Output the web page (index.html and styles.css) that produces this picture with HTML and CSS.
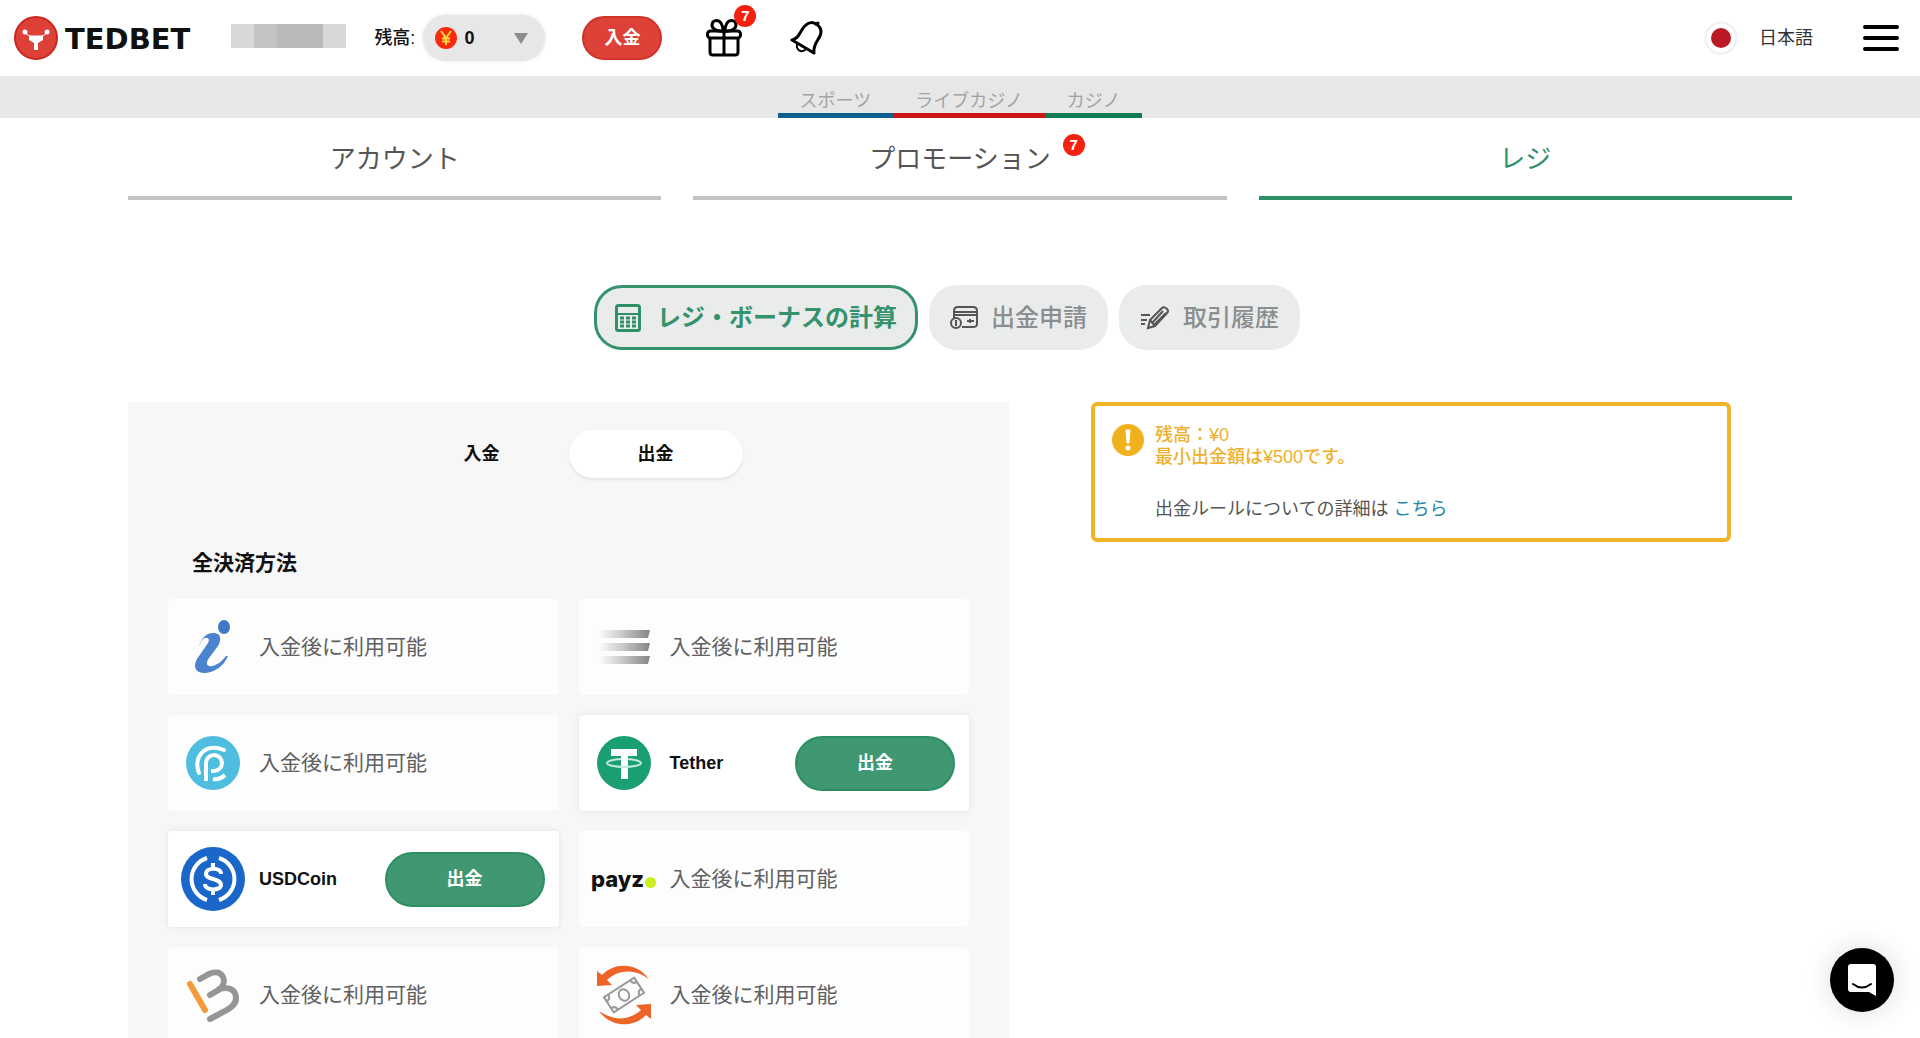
FILE: index.html
```html
<!DOCTYPE html>
<html lang="ja">
<head>
<meta charset="utf-8">
<title>TEDBET</title>
<link rel="stylesheet" href="styles.css">
</head>
<body>
<div class="page">
  <header class="header">
    <a class="logo" href="#">
      <svg width="44" height="44" viewBox="0 0 44 44" aria-hidden="true">
        <circle cx="22" cy="22" r="21" fill="#dc4036" stroke="#c8281f" stroke-width="2"/>
        <path d="M11 16c1 3 4 4 8 4h6c4 0 7-1 8-4" fill="none" stroke="#fff" stroke-width="1"/>
        <circle cx="11" cy="16" r="2.500" fill="#fff"/><circle cx="33" cy="16" r="2.500" fill="#fff"/>
        <path d="M15 20h14v4l-5 3v7h-4v-7l-5-3z" fill="#fff"/>
      </svg>
      <span class="logo-name">TEDBET</span>
    </a>
    <div class="user" aria-hidden="true"><i></i><i></i><i></i><i></i><i></i></div>
    <label class="balance-label" for="balance">残高:</label>
    <div class="balance">
      <svg class="balance-coin" width="22" height="22" viewBox="0 0 22 22" aria-hidden="true">
        <circle cx="11" cy="11" r="11" fill="#fa2a10"/>
        <path d="M6 4l5 7 5-7M11 11v7M7 11.500h8M7 14.500h8" fill="none" stroke="#ffd83a" stroke-width="2"/>
      </svg>
      <select id="balance" class="balance-select"><option>0</option></select>
      <svg class="balance-arrow" width="14" height="11" viewBox="0 0 14 11" aria-hidden="true"><path d="M0 0h14L7 11z" fill="#8c8c8c"/></svg>
    </div>
    <button class="deposit" type="button">入金</button>
    <button class="icon-button gift" type="button" aria-label="プレゼント">
      <svg width="36" height="38" viewBox="0 0 36 38" fill="none" stroke="#000" stroke-width="3" stroke-linejoin="round">
        <rect x="1.500" y="12" width="33" height="7" rx="3"/>
        <path d="M4 19v14q0 3 3 3h22q3 0 3-3V19M18 12v24M17 12C10 13 6 9 6 6c0-5 6-6 9-2q2 3 2 8zM19 12c7 1 11-3 11-6 0-5-6-6-9-2q-2 3-2 8z"/>
      </svg>
      <span class="badge gift-badge">7</span>
    </button>
    <button class="icon-button" type="button" aria-label="お知らせ">
      <svg width="34" height="36" viewBox="0 0 34 36" fill="none" stroke="#000" stroke-width="3" stroke-linecap="round" stroke-linejoin="round">
        <path d="M2 20c4-1 6-3 8-7 2-3 3-6 6-8 3-3 7-3 10-1 5 3 6 7 4 12-3 6-7 9-6 17z"/>
        <path d="M26 4l2-1"/><path d="M7 24c-1 6 4 9 8 6" stroke-width="2"/>
      </svg>
    </button>
    <button class="language" type="button">
      <svg width="34" height="34" viewBox="0 0 34 34" aria-hidden="true"><circle cx="17" cy="17" r="15.500" fill="#fff" stroke="#f0eef2" stroke-width="2"/><circle cx="17" cy="17" r="10" fill="#ba1a24"/></svg>
      <span>日本語</span>
    </button>
    <button class="icon-button menu" type="button" aria-label="メニュー">
      <svg width="36" height="28" viewBox="0 0 36 28" stroke="#000" stroke-width="4" stroke-linecap="round"><path d="M2 3h32M2 14h32M2 25h32"/></svg>
    </button>
  </header>

  <nav class="games">
    <a class="games-sports" href="#">スポーツ</a>
    <a class="games-live" href="#">ライブカジノ</a>
    <a class="games-casino" href="#">カジノ</a>
  </nav>

  <nav class="tabs">
    <a href="#">アカウント</a>
    <a href="#"><span class="tab-name">プロモーション<span class="badge tab-badge">7</span></span></a>
    <a class="is-active" href="#">レジ</a>
  </nav>

  <nav class="pills">
    <a class="pill is-active" href="#">
      <svg width="26" height="28" viewBox="0 0 26 28" fill="none" stroke="#2f9068" stroke-width="3" aria-hidden="true">
        <rect x="1.500" y="1.500" width="23" height="25" rx="2"/><path d="M2 10h22" stroke-width="2"/>
        <path d="M5 14h16M5 18h16M5 22h16" stroke-dasharray="4 2"/>
      </svg>
      レジ・ボーナスの計算
    </a>
    <a class="pill" href="#">
      <svg width="28" height="24" viewBox="0 0 28 24" fill="none" stroke="#555" stroke-width="2" aria-hidden="true">
        <path d="M4 12V5q0-4 4-4h15q4 0 4 4v13q0 3-4 3H12M4 6h23M4 9h23M17 15h7M20 13v4"/>
        <circle cx="6" cy="17" r="5" fill="#eaecec"/><path d="M6 14v6"/>
      </svg>
      出金申請
    </a>
    <a class="pill" href="#">
      <svg width="30" height="24" viewBox="0 0 30 24" fill="none" stroke="#555" stroke-width="2" aria-hidden="true">
        <path d="M8 22l2-8L22 2q2-2 5 1 2 2 0 4L15 20zM10 14l5 6M13 16L23 5M15 18L26 7M1 9h9M1 14h6M1 18h4"/>
      </svg>
      取引履歴
    </a>
  </nav>

  <main class="content">
    <section class="panel">
      <div class="switch">
        <button type="button">入金</button>
        <button class="is-active" type="button">出金</button>
      </div>
      <h2 class="panel-title">全決済方法</h2>
      <ul class="methods">
        <li class="method">
          <span class="method-icon">
            <svg width="38" height="54" viewBox="0 0 38 54"><ellipse cx="30" cy="7" rx="6" ry="7" fill="#4078c8"/><path d="M5 27C7 19 12 13 19 13c8 0 9 6 5 13L15 38c-4 6-2 9 3 8 6-1 11-6 14-10h2C30 46 20 53 10 53 1 53-1 46 3 39L14 23c2-4 0-6-3-5-3 1-4 4-6 9z" fill="#4c83d0"/></svg>
          </span>
          <span class="method-note">入金後に利用可能</span>
        </li>
        <li class="method">
          <span class="method-icon">
            <svg width="52" height="36" viewBox="0 0 52 36"><defs><linearGradient id="fade"><stop offset="0" stop-color="#fff"/><stop offset=".5" stop-color="#c4c4c4"/><stop offset="1" stop-color="#858585"/></linearGradient></defs><path d="M0 1h52l-2 8H0zM0 14h52l-2 8H0zM0 27h52l-2 8H0z" fill="url(#fade)"/></svg>
          </span>
          <span class="method-note">入金後に利用可能</span>
        </li>
        <li class="method">
          <span class="method-icon">
            <svg width="54" height="54" viewBox="0 0 54 54"><circle cx="27" cy="27" r="27" fill="#4ebde0"/><g fill="none" stroke="#fff" stroke-width="4"><path d="M13 37C7 23 17 6 38 14" stroke-linecap="round"/><path d="M20 45V27a8 8 0 1 1 8 8H25M27 43q7 1 12-4"/></g></svg>
          </span>
          <span class="method-note">入金後に利用可能</span>
        </li>
        <li class="method is-open">
          <span class="method-icon">
            <svg width="54" height="54" viewBox="0 0 54 54"><circle cx="27" cy="27" r="27" fill="#1a9f74"/><path d="M14 13h26v7h-9v23h-7V20H14z" fill="#fff"/><ellipse cx="27" cy="27" rx="17" ry="4" fill="none" stroke="#c4e8db" stroke-width="2"/><path d="M24 20h7v8h-7z" fill="#fff"/></svg>
          </span>
          <span class="method-name">Tether</span>
          <button class="withdraw" type="button">出金</button>
        </li>
        <li class="method is-open">
          <span class="method-icon">
            <svg width="64" height="64" viewBox="0 0 64 64"><circle cx="32" cy="32" r="32" fill="#1a67c9"/><g fill="none" stroke="#fff" stroke-width="4"><path d="M26 11a22 22 0 0 0 0 42M38 11a22 22 0 0 1 0 42"/><path d="M32 16v6M32 42v6M40 27c0-7-15-7-15 0 0 6 15 4 15 11 0 6-16 6-16-1"/></g></svg>
          </span>
          <span class="method-name">USDCoin</span>
          <button class="withdraw" type="button">出金</button>
        </li>
        <li class="method">
          <span class="method-icon payz">payz<i></i></span>
          <span class="method-note">入金後に利用可能</span>
        </li>
        <li class="method">
          <span class="method-icon">
            <svg width="54" height="54" viewBox="0 0 54 54" fill="none" stroke-width="6" stroke-linecap="round"><path d="M4 16l15 26" stroke="#f29a3c"/><path d="M14 11l9-5c12-6 20 6 11 15l-10 6M33 21c10-3 17 1 17 9 0 6-4 9-9 12l-17 9" stroke="#959595"/></svg>
          </span>
          <span class="method-note">入金後に利用可能</span>
        </li>
        <li class="method">
          <span class="method-icon">
            <svg width="54" height="60" viewBox="0 0 54 60"><g id="turn" fill="#ee6426"><path d="M0 6l5 4C17-3 40-3 52 14 38 4 22 4 10 15l5 5-15 1z"/></g><use href="#turn" transform="rotate(180 27 30)"/><g transform="rotate(-33 27 30)" fill="none" stroke="#999" stroke-width="2"><rect x="9" y="21" width="36" height="18"/><ellipse cx="27" cy="30" rx="5" ry="6"/><path d="M9 26q5 0 5-5M40 21q0 5 5 5M9 34q5 0 5 5M40 39q0-5 5-5"/></g></svg>
          </span>
          <span class="method-note">入金後に利用可能</span>
        </li>
      </ul>
    </section>

    <aside class="notice">
      <svg width="32" height="32" viewBox="0 0 32 32" aria-hidden="true"><circle cx="16" cy="16" r="16" fill="#f0b21c"/><path d="M14 6h4l-1 13h-2z" fill="#fff" stroke="#fff" stroke-linejoin="round"/><circle cx="16" cy="24" r="2.500" fill="#fff"/></svg>
      <div>
        <p class="notice-balance">残高：¥0<br>最小出金額は¥500です。</p>
        <p class="notice-rules">出金ルールについての詳細は <a href="#">こちら</a></p>
      </div>
    </aside>
  </main>
</div>

<button class="chat" type="button" aria-label="チャット">
  <svg width="30" height="34" viewBox="0 0 30 34"><path d="M4 1h22q3 0 3 3v29l-7-4H4q-3 0-3-3V4q0-3 3-3z" fill="#fff"/><path d="M6 21q9 7 18 0" fill="none" stroke="#000" stroke-width="2" stroke-linecap="round"/></svg>
</button>
</body>
</html>
```
FILE: styles.css
```css
* { box-sizing: border-box; }

body {
  margin: 0;
  background: #fff;
  color: #111;
  font-family: "Liberation Sans", "Noto Sans CJK JP", sans-serif;
  font-size: 18px;
  line-height: 22px;
}

button, select {
  border: 0;
  padding: 0;
  font: inherit;
  color: inherit;
  background: none;
}

a { color: inherit; text-decoration: none; }
svg { display: block; }

.page {
  height: 100vh;
  overflow-y: auto;
  scrollbar-width: none;
}

/* Header */
.header {
  display: flex;
  align-items: center;
  height: 76px;
  padding: 0 21px 0 14px;
}

.logo { display: flex; align-items: center; gap: 7px; }
.logo-name {
  padding-top: 2px;
  font-family: "DejaVu Sans", sans-serif;
  font-size: 29px;
  line-height: 36px;
  font-weight: 700;
}

.user { display: flex; margin: 0 28px 4px 41px; }
.user i { width: 23px; height: 24px; background: #b9b9b9; }
.user i:first-child, .user i:last-child { background: #d8d8d8; }
.user i:nth-child(2) { background: #c4c4c4; }

.balance-label { margin-right: 8px; font-weight: 500; }
.balance { position: relative; width: 122px; }
.balance-select {
  appearance: none;
  display: block;
  width: 100%;
  height: 46px;
  padding-left: 41px;
  border-radius: 23px;
  background: #e7e7e7;
  box-shadow: 0 0 4px #e7e7e7;
  font-weight: 700;
}
.balance-coin { position: absolute; left: 12px; top: 12px; }
.balance-arrow { position: absolute; right: 17px; top: 18px; pointer-events: none; }

.deposit {
  width: 80px;
  height: 44px;
  margin: 0 44px 0 37px;
  border: 2px solid #d0322a;
  border-radius: 22px;
  background: #dc4238;
  color: #fff;
  font-weight: 700;
}

.icon-button { position: relative; }
.gift { margin-right: 48px; }

.badge {
  display: block;
  position: absolute;
  width: 22px;
  height: 22px;
  border-radius: 11px;
  background: #f5200f;
  color: #fff;
  font-size: 15px;
  line-height: 22px;
  font-weight: 700;
  text-align: center;
}
.gift-badge { top: -14px; right: -14px; }
.tab-badge { top: -7px; right: -34px; }

.language { display: flex; align-items: center; gap: 21px; margin-left: auto; color: #333; }
.menu { margin-left: 50px; }

/* Game categories */
.games {
  display: flex;
  justify-content: center;
  height: 42px;
  background: #e7e7e7;
  color: #a3a3a3;
}
.games a {
  padding: 14px 22px 0;
  border-bottom: 5px solid var(--line);
}
.games-sports { --line: #0b6090; }
.games-live { --line: #cc1616; }
.games-casino { --line: #117c54; }

/* Account sections */
.tabs {
  display: grid;
  grid-template-columns: repeat(3, 1fr);
  gap: 32px;
  padding: 0 128px;
  color: #555;
  font-size: 26px;
  line-height: 36px;
  text-align: center;
}
.tabs a { padding: 23px 0 19px; border-bottom: 4px solid #c3c3c3; }
.tabs .is-active { border-color: #2b8f68; color: #2b8f68; }
.tab-name { position: relative; display: inline-block; }

.pills {
  display: flex;
  justify-content: center;
  gap: 11px;
  margin: 85px 26px 0 0;
}
.pill {
  display: flex;
  align-items: center;
  gap: 13px;
  height: 65px;
  padding: 0 18px;
  border: 3px solid #eaecec;
  border-radius: 28px;
  background: #eaecec;
  color: #8b8d8f;
  font-size: 24px;
  font-weight: 500;
}
.pill.is-active {
  gap: 16px;
  border-color: #35926c;
  color: #35926c;
  font-weight: 700;
}

/* Cashier */
.content {
  display: grid;
  grid-template-columns: 881fr 640fr;
  align-items: start;
  gap: 82px;
  padding: 52px 189px 0 128px;
}
.panel {
  padding: 28px 40px 20px;
  background: #f7f7f7;
}
.switch { display: flex; justify-content: center; }
.switch button {
  width: 174px;
  height: 48px;
  border-radius: 24px;
  font-weight: 700;
}
.switch .is-active { background: #fff; box-shadow: 0 2px 3px #e2e2e2; }

.panel-title {
  margin: 72px 0 23px;
  padding-left: 24px;
  font-size: 21px;
  line-height: 26px;
}

.methods {
  display: grid;
  grid-template-columns: 1fr 1fr;
  gap: 20px;
  margin: 0;
  padding: 0;
  list-style: none;
}
.method {
  display: flex;
  align-items: center;
  gap: 13px;
  height: 96px;
  padding: 0 14px 0 12px;
  border-radius: 4px;
  background: #fdfdfd;
}
.method.is-open { background: #fff; box-shadow: 0 0 6px #e2e2e2; }
.method-icon { display: flex; justify-content: center; width: 66px; }
.method-note { color: #606060; font-size: 21px; }
.method-name { font-weight: 700; }

.payz {
  align-items: center;
  gap: 1px;
  font-family: Inter, sans-serif;
  font-size: 22px;
  font-weight: 800;
}
.payz i {
  width: 11px;
  height: 11px;
  margin-top: 6px;
  border-radius: 6px;
  background: #c9f01e;
}

.withdraw {
  width: 160px;
  height: 55px;
  margin-left: auto;
  border: 2px solid #2b8f63;
  border-radius: 28px;
  background: #409872;
  color: #fff;
  font-weight: 700;
}

.notice {
  display: flex;
  gap: 11px;
  padding: 18px 18px 18px 17px;
  border: 4px solid #f0b429;
  border-radius: 6px;
}
.notice-balance { margin: 0 0 30px; color: #eeb02c; font-weight: 500; }
.notice-rules { margin: 0; color: #555; }
.notice-rules a { color: #2a89a8; }

.chat {
  position: fixed;
  right: 26px;
  bottom: 26px;
  display: grid;
  place-items: center;
  width: 64px;
  height: 64px;
  border-radius: 32px;
  background: #000;
  box-shadow: 0 0 28px #ddd;
}
```
